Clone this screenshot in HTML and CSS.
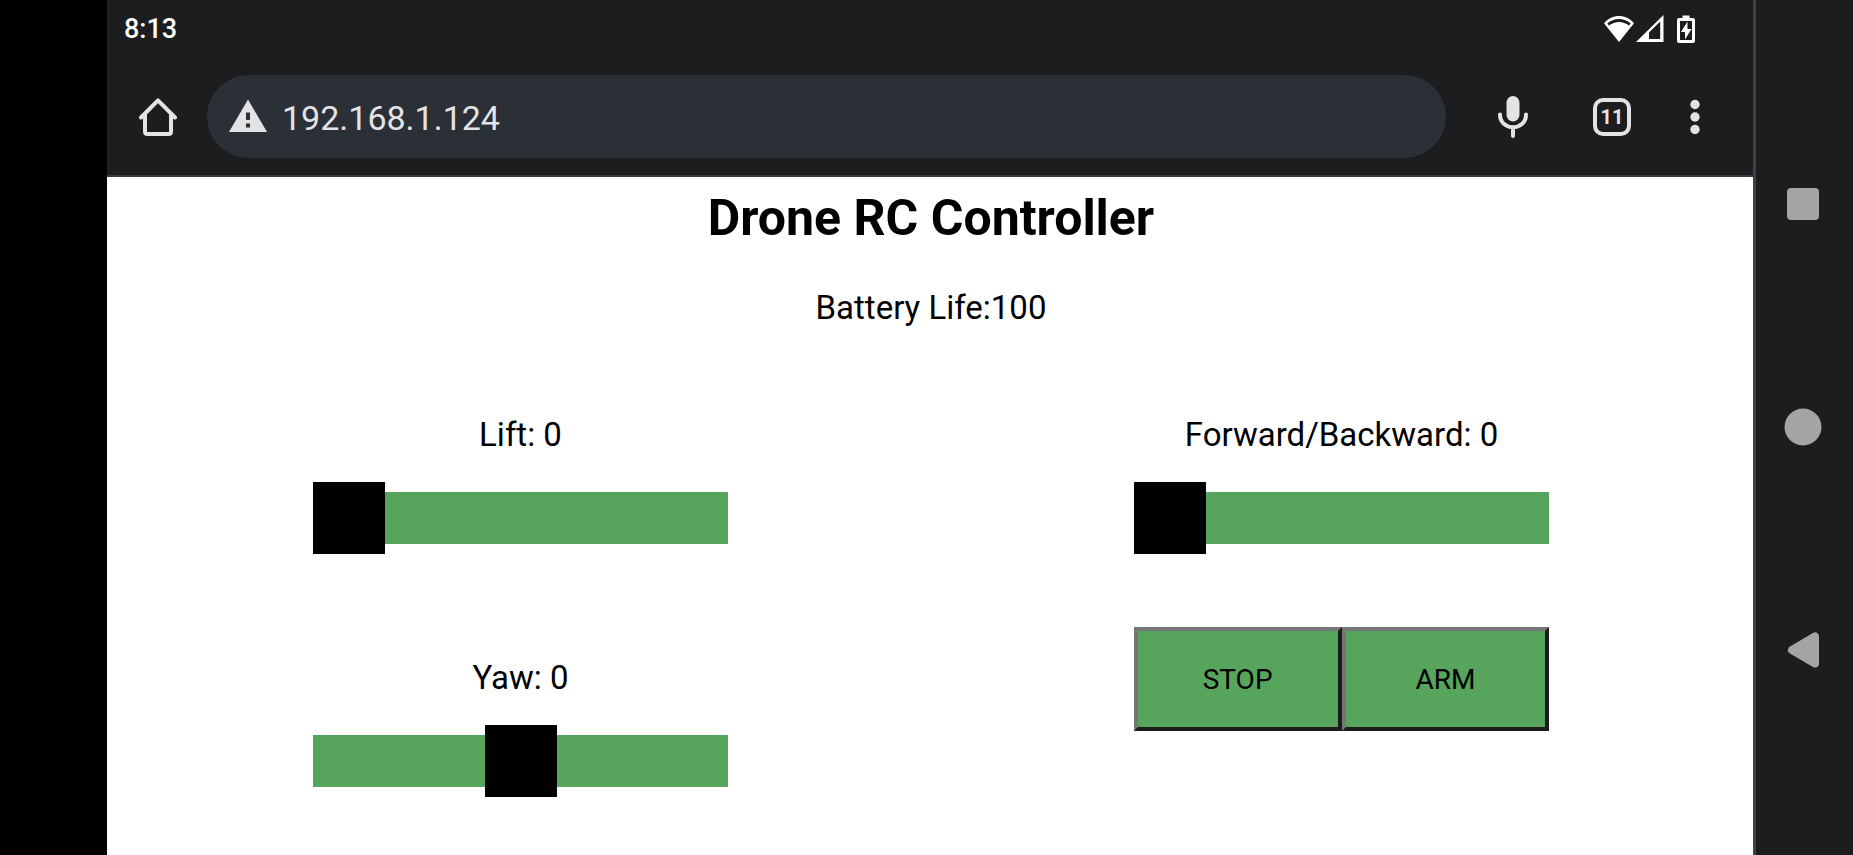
FILE: index.html
```html
<!DOCTYPE html>
<html lang="en">
<head>
<meta charset="utf-8">
<meta name="viewport" content="width=device-width, initial-scale=1">
<title>Drone RC Controller</title>
<link rel="stylesheet" href="styles.css">
</head>
<body>
<div class="device">
  <div class="screen">
    <header class="browser">
      <div class="status">
        <time class="clock">8:13</time>
        <div class="signals">
          <svg class="wifi" viewBox="0 0 32 28" aria-hidden="true">
            <path d="M1 8.200C9.500-1.300 22.500-1.300 31 8.200L16 27z" fill="#fff"/>
            <path d="M4.300 8.600C10.700 2.500 21.300 2.500 27.700 8.600L26 10.600C20 5.700 12 5.700 6 10.600z" fill="#1c1d1f"/>
          </svg>
          <svg class="cell" viewBox="0 0 28 28" aria-hidden="true">
            <path d="M0 27L27.500 0V27z" fill="#fff"/>
            <path d="M13 17.500L24.200 6.500V24H13z" fill="#1c1d1f"/>
          </svg>
          <svg class="battery" viewBox="0 0 18 28" aria-hidden="true">
            <path d="M5.500 0.500h7v2.500h3.500q2 0 2 2v21q0 2-2 2h-14q-2 0-2-2v-21q0-2 2-2h3.500z" fill="#fff"/>
            <path d="M3 6h12v19H3z" fill="#1c1d1f"/>
            <path d="M10.500 6.500L4 17h4v7.500L14.500 14h-4z" fill="#fff"/>
          </svg>
        </div>
      </div>
      <div class="toolbar">
        <button class="tool home" type="button" aria-label="Home">
          <svg viewBox="0 0 38 38" aria-hidden="true">
            <path d="M2 19.500L19 2.300L36 19.500M6 17V33.500Q6 36 8.500 36H29.500Q32 36 32 33.500V17" fill="none" stroke="#e3e3e6" stroke-width="4" stroke-linejoin="round" stroke-linecap="round"/>
          </svg>
        </button>
        <div class="omnibox">
          <button class="tool" type="button" aria-label="Connection is not secure">
            <svg viewBox="0 0 38 38" aria-hidden="true">
              <path d="M19 0.500L38 33H0z" fill="#e3e3e6"/>
              <path d="M17 13.500h4v7.500h-4zM17 24.500h4v4h-4z" fill="#2b2f36"/>
            </svg>
          </button>
          <input class="url" type="text" value="192.168.1.124" aria-label="Address">
        </div>
        <button class="tool mic" type="button" aria-label="Voice search">
          <svg viewBox="0 0 38 44" aria-hidden="true">
            <rect x="12.500" y="1" width="13" height="25.500" rx="6.500" fill="#e3e3e6"/>
            <path d="M6 19.500C6 36.500 32 36.500 32 19.500M19 33V41" fill="none" stroke="#e3e3e6" stroke-width="4" stroke-linecap="round"/>
          </svg>
        </button>
        <button class="tool tabs" type="button" aria-label="11 open tabs">11</button>
        <button class="tool more" type="button" aria-label="More">
          <svg viewBox="0 0 38 38" aria-hidden="true" fill="#e3e3e6">
            <circle cx="19" cy="6.500" r="4.700"/><circle cx="19" cy="19" r="4.700"/><circle cx="19" cy="31.500" r="4.700"/>
          </svg>
        </button>
      </div>
    </header>
    <main class="page">
      <h1 class="title">Drone RC Controller</h1>
      <p class="life">Battery Life:100</p>
      <div class="controls">
        <div class="control">
          <label for="lift">Lift: 0</label>
          <input class="slider" id="lift" type="range" min="0" max="100" value="0">
        </div>
        <div class="control">
          <label for="forward">Forward/Backward: 0</label>
          <input class="slider" id="forward" type="range" min="0" max="100" value="0">
        </div>
        <div class="control">
          <label for="yaw">Yaw: 0</label>
          <input class="slider" id="yaw" type="range" min="-100" max="100" value="0">
        </div>
        <div class="actions">
          <button class="action" type="button">STOP</button>
          <button class="action" type="button">ARM</button>
        </div>
      </div>
    </main>
  </div>
  <nav class="system" aria-label="System navigation">
    <button class="tool" type="button" aria-label="Recent apps">
      <svg viewBox="0 0 38 38" aria-hidden="true"><rect x="3" y="3" width="32" height="32" rx="4" fill="#a3a4a6"/></svg>
    </button>
    <button class="tool" type="button" aria-label="Home screen">
      <svg viewBox="0 0 38 38" aria-hidden="true"><circle cx="19" cy="19" r="18.500" fill="#a3a4a6"/></svg>
    </button>
    <button class="tool" type="button" aria-label="Back">
      <svg viewBox="0 0 38 38" aria-hidden="true"><path d="M8 19L31 5.500V32.500z" fill="#a3a4a6" stroke="#a3a4a6" stroke-width="8" stroke-linejoin="round"/></svg>
    </button>
  </nav>
</div>
</body>
</html>
```
FILE: styles.css
```css
* {
  box-sizing: border-box;
}

body {
  margin: 0;
  background: #000;
  font-family: Roboto, "Liberation Sans", sans-serif;
}

button,
input {
  font-family: inherit;
}

.device {
  display: flex;
  min-height: 100vh;
  padding-left: 107px;
}

.screen {
  display: flex;
  flex: 1;
  flex-direction: column;
  min-width: 0;
}

/* Browser chrome */

.browser {
  background: #1c1d1f;
  border-bottom: 2px solid #343b41;
}

.status {
  display: flex;
  align-items: center;
  justify-content: space-between;
  height: 58px;
  padding: 0 58px 0 17px;
}

.clock {
  color: #fff;
  font-size: 27px;
  font-weight: 500;
}

.signals {
  display: flex;
  align-items: center;
}

.wifi {
  width: 32px;
  height: 28px;
}

.cell {
  width: 28px;
  height: 28px;
  margin: 0 13px 0 1px;
}

.battery {
  width: 18px;
  height: 28px;
}

.toolbar {
  display: flex;
  align-items: center;
  height: 117px;
  padding: 0 39px 0 32px;
}

.tool {
  display: flex;
  flex: none;
  align-items: center;
  justify-content: center;
  width: 38px;
  padding: 0;
  background: none;
  border: 0;
  color: #e3e3e6;
  cursor: pointer;
}

.tool svg {
  display: block;
  width: 100%;
}

.omnibox {
  display: flex;
  flex: 1;
  align-items: center;
  gap: 15px;
  min-width: 0;
  height: 83px;
  margin: 0 48px 0 30px;
  padding: 2px 22px 0;
  background: #2b2f36;
  border-radius: 42px;
}

.url {
  flex: 1;
  min-width: 0;
  padding: 0;
  background: none;
  border: 0;
  color: #e3e3e6;
  font-size: 34px;
  line-height: 40px;
}

.tabs {
  height: 38px;
  margin: 0 45px 0 61px;
  border: 4px solid #e3e3e6;
  border-radius: 10px;
  font-size: 20px;
  font-weight: 700;
}

/* Controller page */

.page {
  flex: 1;
  padding: 11px 1px 0 3px;
  background: #fff;
  color: #000;
  font-size: 33px;
  line-height: 40px;
  text-align: center;
}

.title {
  margin: 0 0 40px;
  font-size: 50px;
  line-height: 60px;
}

.life {
  margin: 0 0 56px;
}

.controls {
  display: grid;
  grid-template-columns: 1fr 1fr;
  row-gap: 73px;
}

.control {
  display: flex;
  flex-direction: column;
  align-items: center;
  gap: 37px;
  padding: 31px 0 10px;
}

.slider {
  width: calc(50% + 5px);
  height: 52px;
  margin: 0;
  appearance: none;
  background: #57a55d;
  cursor: pointer;
}

.slider::-webkit-slider-thumb {
  width: 72px;
  height: 72px;
  appearance: none;
  background: #000;
}

.slider::-moz-range-thumb {
  width: 72px;
  height: 72px;
  background: #000;
  border: 0;
  border-radius: 0;
}

.actions {
  display: flex;
  align-self: start;
  justify-self: center;
  width: calc(50% + 5px);
}

.action {
  flex: 1;
  height: 104px;
  background: #57a55d;
  border: 4px solid;
  border-color: #767676 #1c1c1c #1c1c1c #767676;
  color: #000;
  font-size: 28px;
  cursor: pointer;
}

/* System navigation */

.system {
  display: flex;
  flex: none;
  flex-direction: column;
  align-items: center;
  justify-content: center;
  gap: 185px;
  width: 100px;
  padding: 0 4px 1px 0;
  background: #1c1d1f;
  border-left: 3px solid #3c4247;
}
```
